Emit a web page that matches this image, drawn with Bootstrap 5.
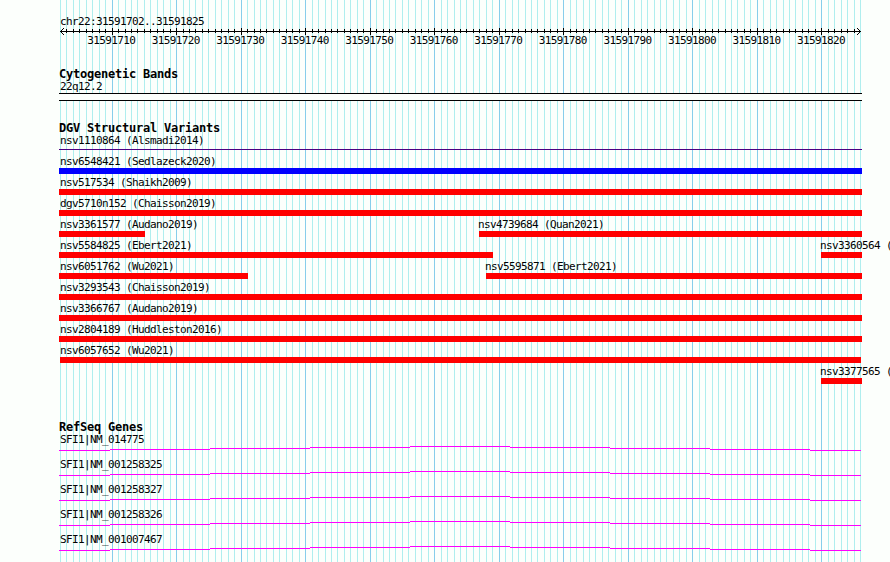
<!DOCTYPE html>
<html lang="en">
<head>
    <title>chr22:31591702..31591825</title>
    <meta charset="utf-8">
    <meta name="viewport" content="width=device-width, initial-scale=1">
    <link href="https://cdn.jsdelivr.net/npm/bootstrap@5.3.3/dist/css/bootstrap.min.css" rel="stylesheet">
    <style>
        body {
            font-family: "DejaVu Sans Mono", monospace;
            font-size: 11px;
            letter-spacing: -0.622px;
            color: #000;
            background-color: #fcfffc;
        }
        /* grid lines and tracks share one cell */
        .browser {
            width: 890px;
            height: 562px;
        }
        .browser > * {
            grid-area: 1 / 1;
        }
        .tracks {
            padding-top: 13px;
        }
        .track-title {
            font-size: 12px;
            font-weight: bold;
            letter-spacing: -0.224px;
            height: 14px;
            line-height: 20px;
            margin: 0 0 0 59px;
        }
        .feature-label {
            height: 15px;
            line-height: 17px;
            white-space: pre;
        }
        .first-label {
            margin-left: 60px;
        }
        .ruler {
            margin-bottom: 18px;
        }
        .ruler-numbers {
            height: 11px;
            line-height: 11px;
            padding-left: 79px;
        }
        .ruler-numbers span {
            width: 64.516px;
        }
        .cyto {
            margin-bottom: 17px;
        }
        .cyto-band {
            width: 803px;
            height: 8px;
            margin-left: 59px;
            border: solid #000;
            border-width: 1px 0;
            background-color: #fcfffc;
        }
        .variants {
            margin-bottom: 33px;
        }
        .feature-row {
            height: 21px;
        }
        .feature {
            width: 0;
        }
        .bar {
            height: 6px;
        }
        .gain { background-color: #00f; }
        .loss { background-color: #f00; }
        .complex {
            height: 1px;
            margin-top: 2px;
            background-color: #4b0082;
        }
        .gene-row {
            height: 25px;
        }
    </style>
</head>
<body class="overflow-hidden">

<div class="browser d-grid overflow-hidden">
    <svg id="grid" width="890" height="562" shape-rendering="crispEdges"></svg>
    <div class="tracks">
        <div class="ruler">
            <div class="feature-label first-label">chr22:31591702..31591825</div>
            <svg id="axis" class="d-block" width="890" height="7" shape-rendering="crispEdges"></svg>
            <div id="numbers" class="ruler-numbers d-flex text-center"></div>
        </div>
        <div class="cyto">
            <h2 class="track-title">Cytogenetic Bands</h2>
            <div class="feature-label first-label">22q12.2</div>
            <div class="cyto-band"></div>
        </div>
        <div class="variants">
            <h2 class="track-title">DGV Structural Variants</h2>
            <div id="variants"></div>
        </div>
        <div>
            <h2 class="track-title">RefSeq Genes</h2>
            <div id="genes"></div>
        </div>
    </div>
</div>

<script src="https://cdn.jsdelivr.net/npm/bootstrap@5.3.3/dist/js/bootstrap.bundle.min.js"></script>
<script>
    const start = 31591702;
    const end = 31591825;
    const scale = 800 / (end - start + 1);

    // Grid and ruler
    let lines = '';
    let ticks = '<path d="M60 3h801v1H60z"/>';
    let numbers = '';
    for (let pos = start; pos <= end + 1; pos++) {
        let x = Math.round(60 + (pos - start) * scale);
        let major = pos % 10 === 0;
        lines += `<rect x="${x}" y="0" width="1" height="562" fill="${major ? '#87ceeb' : '#afeeee'}"/>`;
        if (major) {
            ticks += `<rect x="${x}" y="0" width="1" height="7"/>`;
            numbers += `<span class="flex-shrink-0">${pos}</span>`;
        } else if (pos > start && pos <= end) {
            ticks += `<rect x="${x}" y="1" width="1" height="4"/>`;
        }
    }
    // arrow heads, one pixel per step
    for (let i = 0; i < 4; i++) {
        for (let y of [3 - i, 3 + i]) {
            ticks += `<rect x="${60 + i}" y="${y}" width="1" height="1"/>`;
            ticks += `<rect x="${860 - i}" y="${y}" width="1" height="1"/>`;
        }
    }
    document.getElementById('grid').innerHTML = lines;
    document.getElementById('axis').innerHTML = ticks;
    document.getElementById('numbers').innerHTML = numbers;

    // [label, from, to, type] for each feature of a row
    const variants = [
        [['nsv1110864 (Alsmadi2014)', 59, 862, 'complex']],
        [['nsv6548421 (Sedlazeck2020)', 59, 862, 'gain']],
        [['nsv517534 (Shaikh2009)', 59, 862, 'loss']],
        [['dgv5710n152 (Chaisson2019)', 59, 862, 'loss']],
        [['nsv3361577 (Audano2019)', 59, 145, 'loss'], ['nsv4739684 (Quan2021)', 479, 862, 'loss']],
        [['nsv5584825 (Ebert2021)', 59, 493, 'loss'], ['nsv3360564 (', 821, 862, 'loss']],
        [['nsv6051762 (Wu2021)', 59, 248, 'loss'], ['nsv5595871 (Ebert2021)', 486, 862, 'loss']],
        [['nsv3293543 (Chaisson2019)', 59, 862, 'loss']],
        [['nsv3366767 (Audano2019)', 59, 862, 'loss']],
        [['nsv2804189 (Huddleston2016)', 59, 862, 'loss']],
        [['nsv6057652 (Wu2021)', 60, 861, 'loss']],
        [['nsv3377565 (', 821, 862, 'loss']]
    ];
    document.getElementById('variants').innerHTML = variants.map(row => {
        let used = 0;
        let html = '';
        for (let [label, from, to, type] of row) {
            let shift = from < 61 ? 60 - from : -1;
            html += `<div class="feature" style="margin-left: ${from - used}px">
                <div class="feature-label" style="margin-left: ${shift}px">${label}</div>
                <div class="bar ${type}" style="width: ${to - from}px"></div>
            </div>`;
            used = from;
        }
        return `<div class="feature-row d-flex">${html}</div>`;
    }).join('');

    // Introns are hats that rise one pixel at every step
    const genes = ['NM_014775', 'NM_001258325', 'NM_001258327', 'NM_001258326', 'NM_001007467'];
    const edges = [59, 110, 210, 310, 410, 510, 610, 710, 810, 861];
    let intron = '';
    for (let i = 0; i < 9; i++) {
        intron += `<rect x="${edges[i]}" y="${Math.abs(4 - i)}" width="${edges[i + 1] - edges[i]}" height="1"/>`;
    }
    document.getElementById('genes').innerHTML = genes.map(name =>
        `<div class="gene-row">
            <div class="feature-label first-label">SFI1|${name}</div>
            <svg class="d-block" width="890" height="5" fill="#f0f" shape-rendering="crispEdges">${intron}</svg>
        </div>`
    ).join('');
</script>
</body>
</html>
